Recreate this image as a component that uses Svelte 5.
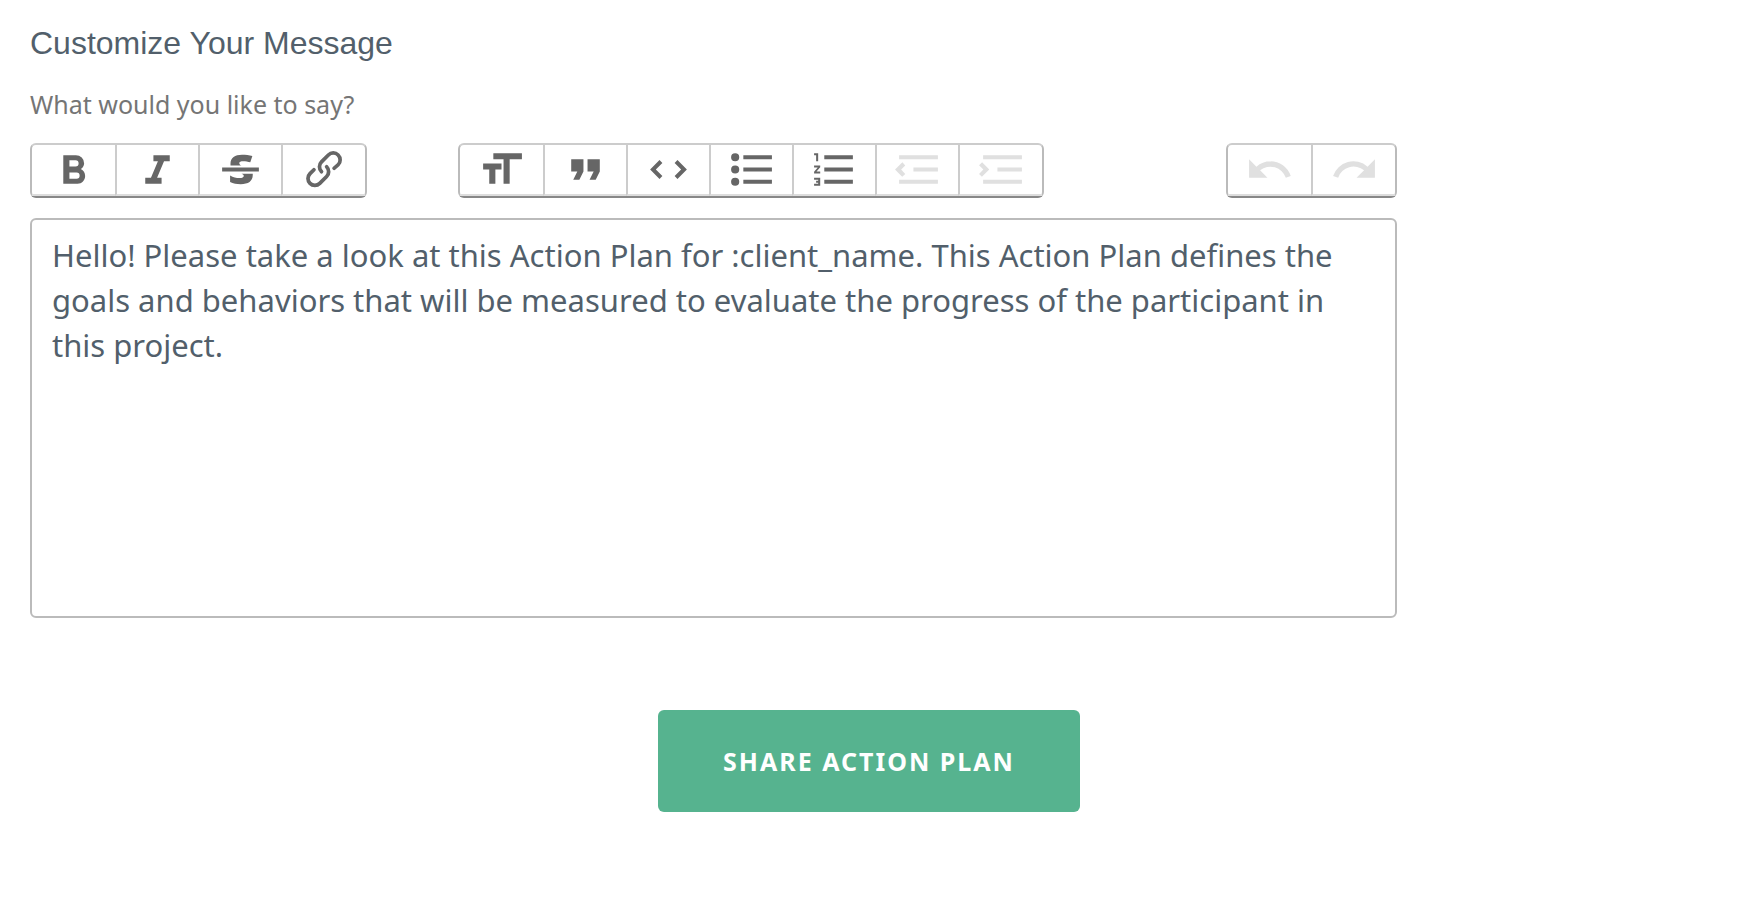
<script lang="ts">
  type Tool = {
    label: string;
    path: string;
    disabled?: boolean;
  };

  const textTools: Tool[] = [
    {
      label: 'Bold',
      path: 'M15.6 11.8c1-.7 1.6-1.8 1.6-2.8a4 4 0 0 0-4-4H7v14h7c2.1 0 3.7-1.7 3.7-3.8 0-1.5-.8-2.8-2.1-3.4zM10 7.5h3a1.5 1.5 0 1 1 0 3h-3v-3zm3.5 9H10v-3h3.5a1.5 1.5 0 1 1 0 3z',
    },
    { label: 'Italic', path: 'M10 5v3h2.2l-3.4 8H6v3h8v-3h-2.2l3.4-8H18V5z' },
    {
      label: 'Strikethrough',
      path: 'M3 11h18v2H3zM7.1 10.1V9c0-2.7 2.2-4.2 5.6-4.2 1.8 0 3.6.2 5.1.6l-1 3.1c-1.1-.4-2.4-.6-3.400-.6-1.300 0-2 .3-2 .9 0 .6.4 1 1.100 1.300zM6.900 14.900c1.500.9 3 1.300 4.600 1.300 1.400 0 2.100-.4 2.100-1 0-.5-.3-.8-1.100-1.100H18v.6c0 3-2.200 4.500-5.900 4.500-1.900 0-3.700-.4-5.200-1.100z',
    },
    {
      label: 'Link',
      path: 'M9.88 13.7a4.3 4.3 0 0 1 0-6.07l3.37-3.37a4.26 4.26 0 0 1 6.07 0 4.3 4.3 0 0 1 0 6.06l-1.96 1.72a.91.91 0 1 1-1.3-1.3l1.97-1.71a2.46 2.46 0 0 0-3.48-3.48l-3.38 3.37a2.46 2.46 0 0 0 0 3.48.91.91 0 1 1-1.3 1.3zM4.25 19.46a4.3 4.3 0 0 1 0-6.07l1.93-1.9a.91.91 0 1 1 1.3 1.3l-1.93 1.9a2.46 2.46 0 0 0 3.48 3.48l3.37-3.38c.96-.96.96-2.52 0-3.48a.91.91 0 1 1 1.3-1.3 4.3 4.3 0 0 1 0 6.07l-3.38 3.38a4.26 4.26 0 0 1-6.07 0z',
    },
  ];

  const blockTools: Tool[] = [
    { label: 'Heading', path: 'M12 9v3H9v7H6v-7H3V9h9zM8 4h14v3h-6v12h-3V7H8V4z' },
    { label: 'Quote', path: 'M6 17h3l2-4V7H5v6h3zm8 0h3l2-4V7h-6v6h3z' },
    {
      label: 'Code',
      path: 'M18.2 12L15 15.2l1.4 1.4L21 12l-4.6-4.6L15 8.8l3.2 3.2zM5.8 12L9 8.8 7.6 7.4 3 12l4.6 4.6L9 15.2 5.8 12z',
    },
    {
      label: 'Bullets',
      path: 'M4 4a2 2 0 1 0 0 4 2 2 0 0 0 0-4zm0 6a2 2 0 1 0 0 4 2 2 0 0 0 0-4zm0 6a2 2 0 1 0 0 4 2 2 0 0 0 0-4zM8 5v2h14V5zm0 6v2h14v-2zm0 6v2h14v-2z',
    },
    {
      label: 'Numbers',
      path: 'M2 17h2v.5H3v1h1v.5H2v1h3v-4H2v1zm1-9h1V4H2v1h1v3zm-1 3h1.8L2 13.1v.9h3v-1H3.2L5 10.9V10H2v1zm5-6v2h14V5H7zm0 14h14v-2H7v2zm0-6h14v-2H7v2z',
    },
    {
      label: 'Decrease Level',
      path: 'M3 19h19v-2H3v2zm7-6h12v-2H10v2zm-8.3-.3l2.8 2.9L6 14.2 4 12l2-2-1.4-1.5L1 12l.7.7zM3 5v2h19V5H3z',
      disabled: true,
    },
    {
      label: 'Increase Level',
      path: 'M3 19h19v-2H3v2zm7-6h12v-2H10v2zm-6.9-1L1 14.2l1.4 1.4L6 12l-.7-.7-2.8-2.8L1 9.9 3.1 12zM3 5v2h19V5H3z',
      disabled: true,
    },
  ];

  const historyTools: Tool[] = [
    {
      label: 'Undo',
      path: 'M12.5 8c-2.6 0-5 1-6.9 2.6L2 7v9h9l-3.6-3.6A8 8 0 0 1 20 16l2.4-.8a10.5 10.5 0 0 0-10-7.2z',
      disabled: true,
    },
    {
      label: 'Redo',
      path: 'M18.4 10.6a10.5 10.5 0 0 0-16.9 4.6L4 16a8 8 0 0 1 12.7-3.6L13 16h9V7l-3.6 3.6z',
      disabled: true,
    },
  ];

  let message = $state(
    'Hello! Please take a look at this Action Plan for :client_name. This Action Plan defines the goals and behaviors that will be measured to evaluate the progress of the participant in this project.'
  );
</script>

{#snippet group(name: string, tools: Tool[])}
  <div class="toolbar__group" role="group" aria-label={name}>
    {#each tools as tool}
      <button class="toolbar__button" type="button" aria-label={tool.label} disabled={tool.disabled}>
        <svg class="toolbar__icon" viewBox="0 0 24 24" aria-hidden="true"><path d={tool.path} /></svg>
      </button>
    {/each}
  </div>
{/snippet}

<form class="share" onsubmit={(e) => e.preventDefault()}>
  <h2 class="share__title">Customize Your Message</h2>
  <label class="share__label" for="message">What would you like to say?</label>

  <div class="editor">
    <div class="toolbar">
      {@render group('Text', textTools)}
      <span class="toolbar__spacer"></span>
      {@render group('Block', blockTools)}
      <span class="toolbar__spacer toolbar__spacer--wide"></span>
      {@render group('History', historyTools)}
    </div>
    <textarea class="editor__input" id="message" spellcheck="false" bind:value={message}></textarea>
  </div>

  <button class="share__submit" type="submit">Share Action Plan</button>
</form>

<style>
  :global(body) {
    margin: 0;
    background: #ffffff;
  }

  .share {
    display: flex;
    flex-direction: column;
    padding: 23px 30px;
    font-family: 'Noto Sans', 'Open Sans', sans-serif;
  }

  .share__title {
    margin: 0;
    color: #525f6b;
    font-family: 'Liberation Sans', Arial, sans-serif;
    font-size: 32px;
    font-weight: 400;
    line-height: 40px;
  }

  .share__label {
    margin-top: 25px;
    color: #757575;
    font-size: 25px;
    line-height: 32px;
  }

  .editor {
    max-width: 1367px;
    margin-top: 23px;
  }

  .toolbar {
    display: flex;
    margin-bottom: 20px;
  }

  .toolbar__group {
    display: flex;
    border: 2px solid #bbbbbb;
    border-top-color: #cccccc;
    border-bottom-color: #888888;
    border-radius: 6px;
  }

  .toolbar__spacer {
    flex: 1;
  }

  .toolbar__spacer--wide {
    flex: 2;
  }

  .toolbar__button {
    box-sizing: border-box;
    display: flex;
    align-items: center;
    justify-content: center;
    width: 83px;
    height: 51px;
    padding: 0;
    border: 0;
    border-bottom: 2px solid #dddddd;
    background: transparent;
    cursor: pointer;
  }

  .toolbar__button:last-child {
    width: 84px;
  }

  .toolbar__button:not(:first-child) {
    border-left: 2px solid #cccccc;
  }

  .toolbar__icon {
    flex: none;
    width: 49px;
    height: 49px;
    fill: #666666;
  }

  .toolbar__button:disabled {
    cursor: default;
  }

  .toolbar__button:disabled .toolbar__icon {
    fill: #e0e0e0;
  }

  .editor__input {
    box-sizing: border-box;
    display: block;
    width: 100%;
    height: 400px;
    padding: 13px 20px;
    border: 2px solid #bbbbbb;
    border-radius: 6px;
    outline: none;
    resize: none;
    color: #525f6b;
    font-family: inherit;
    font-size: 31px;
    line-height: 45px;
  }

  .share__submit {
    align-self: center;
    margin-top: 92px;
    padding: 31px 65px;
    border: 0;
    border-radius: 6px;
    background: #56b38f;
    color: #ffffff;
    font-family: inherit;
    font-size: 25px;
    font-weight: 700;
    line-height: 40px;
    letter-spacing: 2px;
    text-transform: uppercase;
    cursor: pointer;
  }
</style>
